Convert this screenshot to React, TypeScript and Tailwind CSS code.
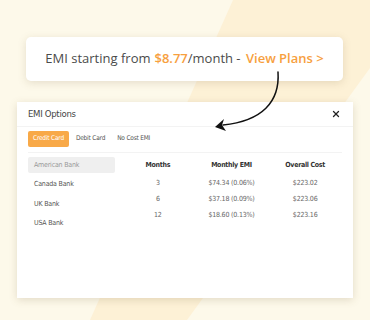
import { X } from "lucide-react";

const banks = ["American Bank", "Canada Bank", "UK Bank", "USA Bank"];

const plans = [
  { months: "3", emi: "$74.34 (0.06%)", total: "$223.02" },
  { months: "6", emi: "$37.18 (0.09%)", total: "$223.06" },
  { months: "12", emi: "$18.60 (0.13%)", total: "$223.16" },
];

const narrow = "font-['DejaVu_Sans_Condensed',sans-serif]";

export default function App() {
  return (
    <div className="relative h-[320px] w-[370px] overflow-hidden bg-[#fdf9ea]">
      {/* background band */}
      <svg className="absolute inset-0" width="370" height="320" viewBox="0 0 370 320">
        <polygon points="233,0 370,0 370,68 187,320 90,320" fill="#fdf1d6" />
      </svg>

      <div className="relative flex flex-col pt-[37px]">
        {/* banner */}
        <div className="ml-[26px] flex h-[44px] w-[317px] items-center justify-center rounded-[5px] bg-white shadow-[0_2px_8px_rgba(120,100,60,0.18)] font-['Open_Sans',sans-serif] text-[13px] text-[#4b4b4b]">
          <span>EMI starting from </span>
          <span className="ml-[4px] font-semibold text-[#f7a03e]">$8.77</span>
          <span>/month -&nbsp;</span>
          <span className="ml-[2px] font-semibold text-[#f7a03e]">View Plans &gt;</span>
        </div>

        {/* modal */}
        <div className={`ml-[17px] mt-[21px] flex h-[196px] w-[336px] flex-col bg-white shadow-[0_2px_8px_rgba(120,100,60,0.2)] ${narrow}`}>
          <div className="flex h-[25px] items-center justify-between border-b border-[#f3f3f3] px-[11px]">
            <span className="text-[9.5px] tracking-[-0.3px] text-[#444]">EMI Options</span>
            <X size={10} strokeWidth={3} className="mr-[1px] text-[#222]" />
          </div>

          <div className="flex flex-col px-[11px] pt-[4px]">
            <div className="flex h-[16px] items-center gap-[2px] text-[6.5px] tracking-[-0.2px] text-[#555]">
              <span className="flex h-[16px] items-center rounded-[2px] bg-[#f8a948] px-[5px] text-white">Credit Card</span>
              <span className="px-[5px]">Debit Card</span>
              <span className="px-[5px]">No Cost EMI</span>
            </div>
            <div className="mt-[5px] border-b border-[#f3f3f3]" />

            <div className="mt-[4px] flex">
              <div className="flex w-[87px] flex-col text-[7px] tracking-[-0.2px] text-[#555]">
                {banks.map((b, i) => (
                  <div
                    key={b}
                    className={
                      i === 0
                        ? "flex h-[16px] items-center rounded-[2px] bg-[#efefef] pl-[6px] text-[#999]"
                        : "mt-[3.5px] flex h-[16px] items-center pl-[6px]"
                    }
                  >
                    {b}
                  </div>
                ))}
              </div>

              <div className="ml-[6px] mt-[1px] flex flex-1 flex-col">
                <div className="grid h-[14px] grid-cols-3 items-center text-center text-[7px] font-bold tracking-[-0.3px] text-[#333]">
                  <span>Months</span>
                  <span>Monthly EMI</span>
                  <span>Overall Cost</span>
                </div>
                <div className="mt-[3px] flex flex-col">
                  {plans.map((p) => (
                    <div key={p.months} className="grid h-[16px] grid-cols-3 items-center text-center text-[7px] tracking-[-0.2px] text-[#666]">
                      <span>{p.months}</span>
                      <span>{p.emi}</span>
                      <span>{p.total}</span>
                    </div>
                  ))}
                </div>
              </div>
            </div>
          </div>
        </div>
      </div>

      {/* arrow */}
      <svg className="pointer-events-none absolute inset-0" width="370" height="320" viewBox="0 0 370 320">
        <path d="M278 72 C280 102 262 121 223 125" fill="none" stroke="#111" strokeWidth="1.5" strokeLinecap="round" />
        <polygon points="215,127 224,119 222,125 226,131" fill="#111" />
      </svg>
    </div>
  );
}
